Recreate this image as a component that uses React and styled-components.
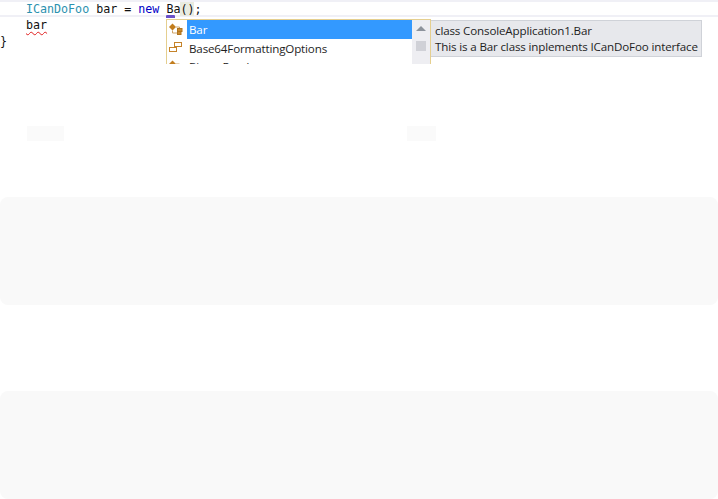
import React from 'react';
import styled, { createGlobalStyle } from 'styled-components';

const GlobalStyle = createGlobalStyle`
  html, body { margin: 0; padding: 0; background: #fff; }
  body { width: 718px; height: 499px; overflow: hidden; }
`;

// Page
const Page = styled.div`
  position: relative;
  width: 718px;
  height: 499px;
  overflow: hidden;
  background: #fff;
`;

// Editor
const Editor = styled.div`
  height: 126px;
  font-family: "DejaVu Sans Mono", monospace;
  font-size: 11.67px;
  color: #111;
`;

const CurrentLine = styled.div`
  display: flex;
  align-items: center;
  height: 13px;
  padding-left: 26px;
  border-top: 2px solid #f0f0f6;
  border-bottom: 2px solid #f0f0f6;
  white-space: pre;
`;

const Line = styled.div`
  height: 16px;
  line-height: 16px;
  padding-left: ${({ indent }) => indent}px;
  white-space: pre;
`;

const TypeName = styled.span`color: #2b91af;`;
const Keyword = styled.span`color: #0000c8;`;
const Brace = styled.span`background: #e9ebe0;`;

const Squiggle = styled.span`
  text-decoration: underline wavy #e02020 1px;
  text-underline-offset: 2px;
`;

const SmartTag = styled.div`
  position: absolute;
  top: 15px;
  left: 166px;
  width: 9px;
  height: 3px;
  border-radius: 1px 1px 0 0;
  background: #6a50c8;
`;

// Completion popup
const Popup = styled.div`
  position: absolute;
  top: 19px;
  left: 166px;
  display: flex;
  width: 265px;
  height: 45px;
  overflow: hidden;
  box-sizing: border-box;
  border: 1px solid #e5cf8f;
  border-bottom: 0;
  background: #fff;
  font-family: "Open Sans", sans-serif;
  font-size: 11.6px;
  letter-spacing: -0.15px;
  color: #1e1e1e;
`;

const List = styled.div`
  flex: 1;
  min-width: 0;
`;

const Row = styled.div`
  display: flex;
  align-items: center;
  height: 18.5px;
`;

const IconCell = styled.div`
  display: flex;
  align-items: center;
  width: 18px;
  height: 100%;
  padding-left: 2px;
  flex-shrink: 0;
`;

const RowLabel = styled.div`
  flex: 1;
  height: 100%;
  line-height: 20px;
  padding-left: 2px;
  background: ${({ selected }) => (selected ? '#3399ff' : 'transparent')};
  color: ${({ selected }) => (selected ? '#fff' : 'inherit')};
`;

const Scrollbar = styled.div`
  display: flex;
  flex-direction: column;
  align-items: center;
  width: 18px;
  flex-shrink: 0;
  background: #eeeef2;
`;

const ScrollArrow = styled.div`
  width: 0;
  height: 0;
  margin-top: 6px;
  border-left: 5px solid transparent;
  border-right: 5px solid transparent;
  border-bottom: 5px solid #8d939c;
`;

const ScrollThumb = styled.div`
  width: 10px;
  height: 10px;
  margin-top: 10px;
  background: #d0d1d7;
`;

// Tooltip
const Tip = styled.div`
  position: absolute;
  top: 20px;
  left: 431px;
  width: 271px;
  height: 37px;
  box-sizing: border-box;
  padding: 2px 0 0 4px;
  border: 1px solid #cfd2d8;
  border-left: 0;
  background: #e7e8ec;
  font-family: "Open Sans", sans-serif;
  font-size: 11.6px;
  letter-spacing: -0.15px;
  line-height: 16px;
  color: #1e1e1e;
  white-space: nowrap;
`;

// Faint placeholders below the editor
const Strips = styled.div`
  display: flex;
  height: 15px;
  padding-left: 27px;
`;

const Strip = styled.div`
  width: ${({ w }) => w}px;
  margin-right: ${({ gap }) => gap || 0}px;
  background: #fafafa;
`;

const Card = styled.div`
  height: 108px;
  margin-top: ${({ top }) => top}px;
  border-radius: 8px;
  background: #f9f9f9;
`;

const ClassIcon = () => (
  <svg width="14" height="15" viewBox="0 0 14 15">
    <path d="M0 5 L3.5 1.5 L7 5 L3.5 8.5 Z" fill="#c27d1e" />
    <path d="M7 5 H10.5 V7" fill="none" stroke="#cfa468" strokeWidth="1" />
    <path d="M3.5 8.5 V11 H8" fill="none" stroke="#cfa468" strokeWidth="1" />
    <rect x="8.5" y="6.5" width="4.5" height="3" fill="#c98a30" stroke="#b0751f" />
    <rect x="8.5" y="9.5" width="3.5" height="3" fill="#c98a30" stroke="#b0751f" />
  </svg>
);

const EnumIcon = () => (
  <svg width="13" height="11" viewBox="0 0 13 11">
    <rect x="5.5" y="0.5" width="7" height="4" fill="#fff" stroke="#c5832a" />
    <rect x="0.5" y="5.5" width="7" height="4" fill="#fff" stroke="#c5832a" />
  </svg>
);

const App = () => (
  <Page>
    <GlobalStyle />
    <Editor>
      <CurrentLine>
        <TypeName>ICanDoFoo</TypeName> bar = <Keyword>new</Keyword> Ba<Brace>(</Brace><Brace>)</Brace><span>;</span>
      </CurrentLine>
      <Line indent={26}>
        <Squiggle>bar</Squiggle>
      </Line>
      <Line indent={-2}>{'}'}</Line>
    </Editor>

    <Strips>
      <Strip w={37} gap={343} />
      <Strip w={29} />
    </Strips>
    <Card top={56} />
    <Card top={86} />

    <SmartTag />

    <Popup>
      <List>
        <Row>
          <IconCell><ClassIcon /></IconCell>
          <RowLabel selected>Bar</RowLabel>
        </Row>
        <Row>
          <IconCell><EnumIcon /></IconCell>
          <RowLabel>Base64FormattingOptions</RowLabel>
        </Row>
        <Row>
          <IconCell><ClassIcon /></IconCell>
          <RowLabel>BinaryReader</RowLabel>
        </Row>
      </List>
      <Scrollbar>
        <ScrollArrow />
        <ScrollThumb />
      </Scrollbar>
    </Popup>

    <Tip>
      class ConsoleApplication1.Bar
      <br />
      This is a Bar class inplements ICanDoFoo interface
    </Tip>
  </Page>
);

export default App;
